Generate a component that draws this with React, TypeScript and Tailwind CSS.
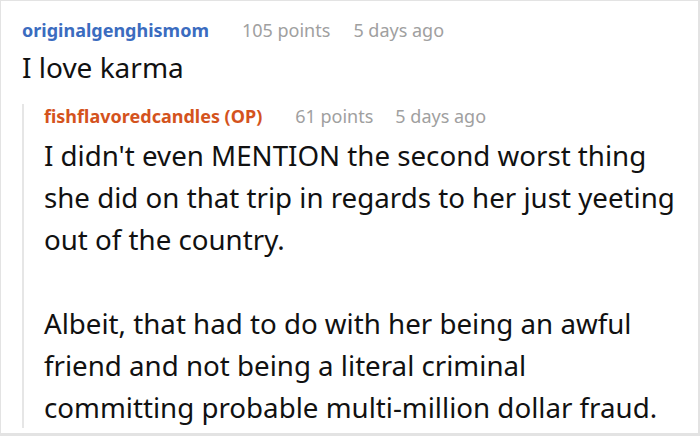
import React from "react";

export default function App() {
  return (
    <div
      className="w-[700px] h-[436px] bg-white border-t border-l border-[#e3e3e3] border-r-2 border-b-[3px] overflow-hidden"
      style={{ fontFamily: '"Noto Sans", "Open Sans", sans-serif' }}
    >
      <div className="pl-[21px] pt-[17px]">
        <div className="flex items-baseline text-[18px] leading-[24px]">
          <span className="font-bold text-[#3b6cbf]">originalgenghismom</span>
          <span className="ml-[33px] text-[#a0a0a0]">105 points</span>
          <span className="ml-[23px] text-[#a0a0a0]">5 days ago</span>
        </div>
        <div className="mt-[5px] text-[28px] leading-[40px] text-[#111]">I love karma</div>

        <div className="mt-[28px] border-l-2 border-[#e6e6e6] pl-[20px] mr-[8px]">
          <div className="-mt-[11px] flex items-baseline text-[18px] leading-[24px]">
            <span className="font-bold text-[#d4531d]">fishflavoredcandles (OP)</span>
            <span className="ml-[33px] text-[#a0a0a0]">61 points</span>
            <span className="ml-[22px] text-[#a0a0a0]">5 days ago</span>
          </div>
          <div className="mt-[6px] -mb-[10px] text-[27.7px] leading-[42px] text-[#111]">
            <p>
              I didn't even MENTION the second worst thing
              <br />
              she did on that trip in regards to her just yeeting
              <br />
              out of the country.
            </p>
            <p className="mt-[42px]">
              Albeit, that had to do with her being an awful
              <br />
              friend and not being a literal criminal
              <br />
              committing probable multi-million dollar fraud.
            </p>
          </div>
        </div>
      </div>
    </div>
  );
}
